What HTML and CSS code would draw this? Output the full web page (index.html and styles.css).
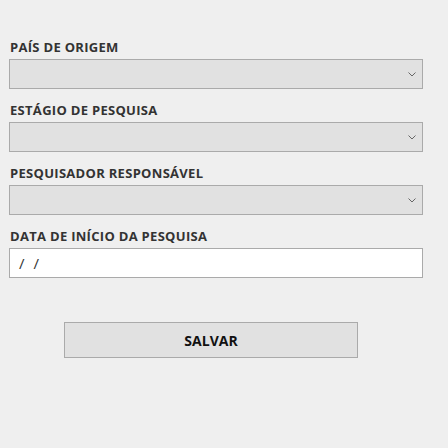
FILE: index.html
```html
<!DOCTYPE html>
<html lang="pt">
<head>
<meta charset="utf-8">
<link rel="stylesheet" href="styles.css">
</head>
<body>
<form class="form">
  <div class="field">
    <label class="label">PAÍS DE ORIGEM</label>
    <div class="select"><svg class="chev" width="8" height="5" viewBox="0 0 8 5"><polyline points="0.5,0.5 4,4 7.5,0.5" fill="none" stroke="#666" stroke-width="1"/></svg></div>
  </div>
  <div class="field">
    <label class="label">ESTÁGIO DE PESQUISA</label>
    <div class="select"><svg class="chev" width="8" height="5" viewBox="0 0 8 5"><polyline points="0.5,0.5 4,4 7.5,0.5" fill="none" stroke="#666" stroke-width="1"/></svg></div>
  </div>
  <div class="field">
    <label class="label">PESQUISADOR RESPONSÁVEL</label>
    <div class="select"><svg class="chev" width="8" height="5" viewBox="0 0 8 5"><polyline points="0.5,0.5 4,4 7.5,0.5" fill="none" stroke="#666" stroke-width="1"/></svg></div>
  </div>
  <div class="field">
    <label class="label">DATA DE INÍCIO DA PESQUISA</label>
    <div class="date"><span class="slash">/</span><span class="slash">/</span></div>
  </div>
  <div class="actions">
    <button type="button" class="btn">SALVAR</button>
  </div>
</form>
</body>
</html>
```
FILE: styles.css
```css
html, body {
  margin: 0;
  padding: 0;
  background: #efefef;
}
body {
  font-family: "Open Sans", "Liberation Sans", sans-serif;
  color: #333;
}
.form {
  width: 414px;
  margin: 0 0 0 9px;
  padding-top: 39px;
}
.field {
  display: flex;
  flex-direction: column;
  gap: 4px;
  margin-bottom: 13px;
}
.label {
  font-size: 13px;
  line-height: 16px;
  font-weight: 700;
  letter-spacing: 0.3px;
  color: #333;
  padding-left: 1px;
}
.select {
  box-sizing: border-box;
  height: 30px;
  background: #e1e1e1;
  border: 1px solid #aaa;
  display: flex;
  align-items: center;
  justify-content: flex-end;
  padding-right: 6px;
}
.chev {
  display: block;
}
.date {
  box-sizing: border-box;
  height: 30px;
  background: #fff;
  border: 1px solid #aaa;
  display: flex;
  align-items: center;
  gap: 9px;
  padding-left: 9px;
  font-size: 15px;
  color: #333;
}
.actions {
  padding-top: 31px;
  padding-left: 55px;
}
.btn {
  box-sizing: border-box;
  width: 294px;
  height: 36px;
  background: #e1e1e1;
  border: 1px solid #aaa;
  font-family: "Open Sans", "Liberation Sans", sans-serif;
  font-size: 14px;
  font-weight: 700;
  color: #111;
  padding: 0;
}
```
